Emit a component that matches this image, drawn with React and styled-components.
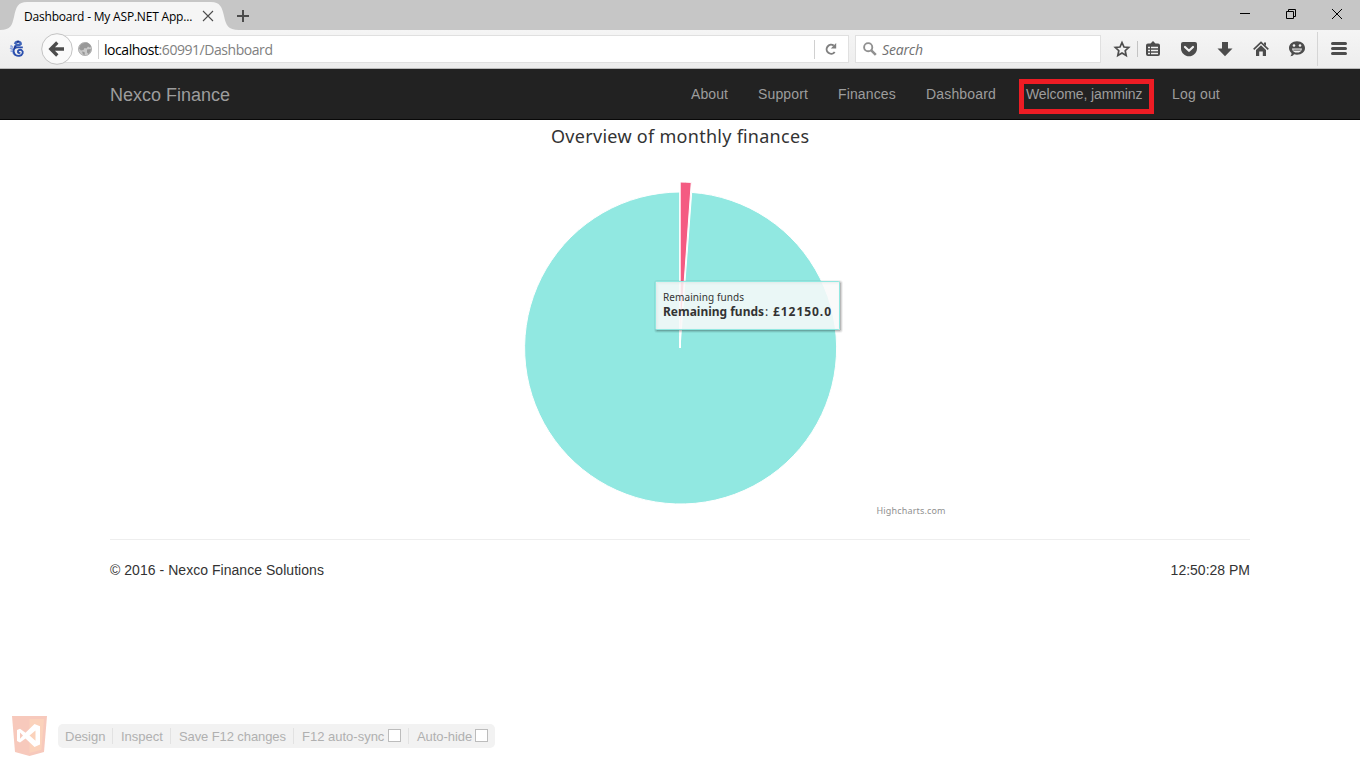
import React from "react";
import styled, { createGlobalStyle } from "styled-components";

const GlobalStyle = createGlobalStyle`
  * { box-sizing: border-box; }
  html, body { margin: 0; padding: 0; background: #fff; overflow: hidden; }
  body { font: 14px/20px "Liberation Sans", Arial, sans-serif; color: #333; }
`;

const uiFont = `"Open Sans", "Noto Sans", sans-serif`;
const chartFont = `"Noto Sans", "Open Sans", sans-serif`;

const Window = styled.div`
  display: flex;
  flex-direction: column;
  width: 1360px;
  height: 768px;
`;

/* ---- browser chrome ---- */
const TitleBar = styled.div`
  display: flex;
  height: 30px;
  flex: none;
  background: #c6c6c6;
`;
const Tab = styled.div`
  display: grid;
  width: 240px;
  height: 30px;
  flex: none;
  & > * { grid-area: 1 / 1; }
`;
const TabContent = styled.div`
  display: flex;
  align-items: center;
  z-index: 1;
  height: 30px;
  padding: 3px 24px 0 24px;
  justify-content: space-between;
`;
const TabTitle = styled.span`
  font: 12px/16px ${uiFont};
  letter-spacing: -0.19px;
  color: #000;
  white-space: nowrap;
`;
const WindowControls = styled.div`
  display: flex;
  flex: 1;
`;
const Spacer = styled.div`
  flex: 1;
`;
const ToolBar = styled.div`
  display: flex;
  align-items: center;
  height: 39px;
  flex: none;
  background: linear-gradient(#f5f5f5, #ededed);
  border-bottom: 1px solid #b9b9b9;
`;
const Glyph = styled.svg`
  display: block;
  flex: none;
  overflow: visible;
  z-index: 1;
`;
const AddressBar = styled.div`
  display: flex;
  align-items: center;
  width: 790px;
  height: 28px;
  margin-left: -14px;
  padding-left: 18px;
  background: #fff;
  border: 1px solid #e0e0e0;
`;
const FieldRule = styled.div`
  width: 1px;
  height: 19px;
  background: #d0d0d0;
`;
const Url = styled.span`
  flex: 1;
  padding: 2px 0 0 5px;
  font: 14px/20px ${uiFont};
  letter-spacing: -0.45px;
  color: #808080;
  b { font-weight: 400; color: #000; }
`;
const SearchBox = styled.div`
  display: flex;
  align-items: center;
  gap: 5px;
  width: 246px;
  height: 28px;
  margin-left: 6px;
  padding-left: 7px;
  background: #fff;
  border: 1px solid #e0e0e0;
  font: italic 14px/20px ${uiFont};
  letter-spacing: -0.15px;
  color: #707070;
`;
const SearchHint = styled.span`
  padding-top: 2px;
`;

/* ---- site ---- */
const NavBar = styled.nav`
  flex: none;
  height: 51px;
  background: #222;
  border-bottom: 1px solid #080808;
`;
const NavInner = styled.div`
  display: flex;
  justify-content: space-between;
  width: 1170px;
  margin: 0 auto;
  padding: 0 45px 0 15px;
`;
const Brand = styled.a`
  padding: 16px 0 14px;
  font-size: 18px;
  color: #9d9d9d;
`;
const NavList = styled.div`
  display: flex;
  gap: 30px;
`;
const NavLink = styled.a`
  position: relative;
  width: ${(p) => p.$w}px;
  padding: 15px 0;
  letter-spacing: ${(p) => p.$track || 0.1}px;
  white-space: nowrap;
  color: #9d9d9d;
`;
const Highlight = styled.span`
  position: absolute;
  left: -7px;
  top: 10px;
  width: 135px;
  height: 35px;
  border: 5px solid #ed1c24;
`;
const Main = styled.main`
  display: flex;
  flex-direction: column;
  align-items: stretch;
  width: 1140px;
  margin: 0 auto;
  flex: 1;
`;
const Chart = styled.svg`
  display: block;
  align-self: center;
  font-family: ${chartFont};
`;
const Footer = styled.footer`
  display: flex;
  justify-content: space-between;
  margin-top: 19px;
  padding-top: 20px;
  border-top: 1px solid #eee;
`;
const Copyright = styled.span`
  letter-spacing: 0.04px;
`;

/* ---- developer link bar ---- */
const DevBar = styled.div`
  display: flex;
  align-items: center;
  gap: 11px;
  flex: none;
  height: 40px;
  margin: 0 0 12px 12px;
`;
const DevMenu = styled.div`
  display: flex;
  align-items: center;
  height: 24px;
  width: 437px;
  border-radius: 5px;
  background: #f2f2f2;
`;
const DevItem = styled.span`
  display: flex;
  align-items: center;
  height: 16px;
  width: ${(p) => p.$w}px;
  padding-left: ${(p) => (p.$first ? 7 : 8)}px;
  border-right: ${(p) => (p.$last ? 0 : 1)}px solid #e2e2e2;
  font-size: 13px;
  line-height: 16px;
  letter-spacing: ${(p) => p.$track || 0}px;
  white-space: nowrap;
  color: #b0b0b0;
`;
const DevLabel = styled.span`
  padding-top: 2px;
`;
const CheckBox = styled.i`
  width: 13px;
  height: 13px;
  margin: -1px 7px 0 auto;
  border: 1px solid #bcbcbc;
  background: #fff;
`;

const ink = "#4c4c4c";

const Fav = () => (
  <Glyph width="18" height="18" viewBox="0 0 18 18" style={{ marginLeft: 9 }} fill="none">
    <path d="M6 4C6.500 1.500 10 .8 11.500 2.800C12.500 4.300 10.800 5.300 8.500 5C6.800 4.800 6 6.400 6.500 7.600" stroke="#3d63b8" strokeWidth="2.400" />
    <path d="M1.500 5.500L4 7.500M1 8L4 9.500M1.500 11L4.500 11.500M3.500 13L5.500 13" stroke="#8ea6e0" strokeWidth="1.700" />
    <path d="M13.800 7.400H9C5.500 7.200 4.200 9.500 4.700 12C5.200 15.300 8 16.200 10.500 15.700C14 15 14.700 11.500 12.600 10.200C10.500 9.200 8.500 10.500 9 12.200C9.300 13.300 10.600 13.200 11 12.300" stroke="#2a4fae" strokeWidth="1.900" />
    <path d="M8 2L10 1.300M5 8.500L6.500 6" stroke="#1d338c" strokeWidth="1.400" />
  </Glyph>
);

const Back = () => (
  <Glyph width="32" height="32" viewBox="0 0 32 32" style={{ marginLeft: 14 }}>
    <circle cx="16" cy="16" r="15.300" fill="#fafafa" stroke="#c3c3c3" />
    <path d="M16.300 9.500L9.800 16L16.300 22.500M10.500 16H23" fill="none" stroke={ink} strokeWidth="3.300" />
  </Glyph>
);

const Globe = () => (
  <Glyph width="14" height="14" viewBox="0 0 14 14" style={{ marginRight: 6 }}>
    <circle cx="7" cy="7" r="6.600" fill="#c9c9c9" stroke="#a8a8a8" strokeWidth=".8" />
    <path d="M4 1.500L9 .6L12 2.500L13 5L11.500 5.500L10 4.500L8.500 6.500L6.500 6L5.500 8L3 8.500L1 6.500L2 3.500ZM9 7.500L12.800 7L12.500 9.500L10.500 12L9 10.500ZM4 9.500L6.500 10L7 12.800L5 12.500Z" fill="#989898" />
  </Glyph>
);

const Reload = () => (
  <Glyph width="12" height="12" viewBox="0 0 12 12" style={{ margin: "0 11px 0 10px" }}>
    <path d="M9.700 9A4.500 4.500 0 1 1 8.800 2.600" fill="none" stroke="#808080" strokeWidth="2" />
    <path d="M11.200 0V5.500H5.800Z" fill="#808080" />
  </Glyph>
);

const Tools = () => (
  <Glyph width="259" height="38" viewBox="1101 30 259 38">
    <path d="M1122 42.500L1124 47L1128.700 47.500L1125.200 50.700L1126.200 55.500L1122 53.100L1117.800 55.500L1118.800 50.700L1115.300 47.500L1120 47Z" fill="none" stroke={ink} strokeWidth="1.700" />
    <path d="M1137.500 41V57" stroke="#c4c4c4" />
    <path d="M1148 43.500H1150.500L1153 41L1155.500 43.500H1158Q1160 43.500 1160 45.500V54Q1160 56 1158 56H1148Q1146 56 1146 54V45.500Q1146 43.500 1148 43.500Z" fill={ink} />
    <path d="M1148 47.500H1150M1151 47.500H1158M1148 50.500H1150M1151 50.500H1158M1148 53.500H1150M1151 53.500H1158" stroke="#f2f2f2" strokeWidth="1.400" />
    <path d="M1183 42H1195Q1197 42 1197 44V48.500C1197 53 1193 56.300 1189 56.300C1185 56.300 1181 53 1181 48.500V44Q1181 42 1183 42Z" fill={ink} />
    <path d="M1185 47L1189 50.800L1193 47" fill="none" stroke="#f2f2f2" strokeWidth="2.200" strokeLinecap="round" strokeLinejoin="round" />
    <path d="M1222 42H1228V48.500H1232.500L1225 56.300L1217.500 48.500H1222Z" fill={ink} />
    <path d="M1253.700 49.300L1261 42.500L1268.300 49.300" fill="none" stroke={ink} strokeWidth="1.700" />
    <path d="M1261 45.300L1266 50V56H1262.800V51.500H1259.200V56H1256V50ZM1264 42.500H1266V46L1264 44.200Z" fill={ink} />
    <path d="M1297 41.200C1301.800 41.200 1305 44.200 1305 48C1305 51.800 1301.800 54.700 1297 54.700C1295.800 54.700 1295 54.500 1294 54.200C1293.500 55.500 1292.200 56.200 1290.300 56.200C1291.300 55.300 1291.600 54.200 1291.500 53C1290 51.700 1289 50 1289 48C1289 44.200 1292.200 41.200 1297 41.200Z" fill={ink} />
    <path d="M1292 48.500H1302C1301.500 51.500 1299.500 52.600 1297 52.600C1294.500 52.600 1292.500 51.500 1292 48.500Z" fill="#f2f2f2" />
    <path d="M1293.300 50.100H1300.700" stroke={ink} strokeWidth="1" />
    <circle cx="1294" cy="45.500" r="1.300" fill="#f2f2f2" />
    <circle cx="1300" cy="45.500" r="1.300" fill="#f2f2f2" />
    <path d="M1317.500 32V66" stroke="#d5d5d5" />
    <path d="M1332.500 43.500H1345.500M1332.500 48.500H1345.500M1332.500 53.500H1345.500" stroke={ink} strokeWidth="3" strokeLinecap="round" />
  </Glyph>
);

const CX = 275;
const CY = 228;
const R = 156;
const SLICE = 0.071;
const wedge = (x, y) =>
  `M${x} ${y}V${y - R}A${R} ${R} 0 0 1 ${x + R * Math.sin(SLICE)} ${y - R * Math.cos(SLICE)}Z`;

const PieChart = () => (
  <Chart width="550" height="400" viewBox="0 0 550 400">
    <text x="146" y="23" fontSize="18" textLength="258" fill="#333">Overview of monthly finances</text>
    <path
      d={`M${CX} ${CY}L${CX + R * Math.sin(SLICE + 0.004)} ${CY - R * Math.cos(SLICE)}A${R} ${R} 0 1 1 ${CX} ${CY - R}Z`}
      fill="#91e8e1" stroke="#fff" strokeWidth="1"
    />
    <path d={`M${CX} ${CY}V${CY - R}`} stroke="#fff" strokeWidth="1.400" />
    <path d={wedge(CX + 0.2, CY - 10)} fill="#f45b82" stroke="#fff" strokeWidth="1" />
    <path d={`M${CX + 0.2} ${CY}V${CY - 12}`} stroke="#fff" strokeWidth="1.600" />
    <g fill="none" stroke="#000">
      <rect x="251.500" y="162.500" width="184" height="48" rx="1" strokeOpacity=".05" strokeWidth="5" />
      <rect x="251.500" y="162.500" width="184" height="48" rx="1" strokeOpacity=".1" strokeWidth="3" />
      <rect x="251.500" y="162.500" width="184" height="48" rx="1" strokeOpacity=".15" strokeWidth="1" />
    </g>
    <rect x="250.500" y="161.500" width="184" height="48" rx="1" fill="#f9f9f9" fillOpacity=".85" stroke="#91e8e1" />
    <g fill="#333">
      <text x="258" y="181" fontSize="10" textLength="81">Remaining funds</text>
      <text x="258" y="196" fontSize="12" fontWeight="700" textLength="101" lengthAdjust="spacingAndGlyphs">Remaining funds</text>
      <text x="360" y="196" fontSize="12">:</text>
      <text x="368" y="196" fontSize="12" fontWeight="700" textLength="58">£12150.0</text>
    </g>
    <text x="471.500" y="394" fontSize="9" textLength="69" fill="#909090">Highcharts.com</text>
  </Chart>
);

const Logo = () => (
  <Glyph width="35" height="40" viewBox="0 0 35 40">
    <path d="M0 0H35L32 36L17.500 40L3 36Z" fill="#f7c9bc" />
    <path d="M17.500 3H32L29.400 33.800L17.500 37Z" fill="#fbd2bb" />
    <path fillRule="evenodd" d="M22.500 8L28 10.300V28.500L22.500 31L13.500 22.500L8 26.500L5 25V14L8 12.700L13.500 16.800ZM23.500 14.500L17.500 19.600L23.500 24.800ZM8 16.600V22.700L11 19.600Z" fill="#fff" />
  </Glyph>
);

export default function App() {
  return (
    <Window>
      <GlobalStyle />
      <TitleBar>
        <Tab>
          <Glyph width="240" height="30" style={{ zIndex: 0 }}>
            <path d="M0 30C11 30 12 25 14 17C16 7 18 2 27 2H211C220 2 222 7 224 16C226 25 228 30 239 30Z" fill="#f5f5f5" />
          </Glyph>
          <TabContent>
            <TabTitle>Dashboard - My ASP.NET App...</TabTitle>
            <Glyph width="16" height="16" viewBox="0 0 16 16" style={{ marginTop: -1 }}>
              <path d="M3 3L13 13M13 3L3 13" stroke="#4c4c4c" strokeWidth="1.100" />
            </Glyph>
          </TabContent>
        </Tab>
        <WindowControls>
          <Glyph width="20" height="30" viewBox="234 0 20 30" style={{ marginLeft: -6 }}>
            <path d="M237 16H249M243 10V22" stroke="#4c4c4c" strokeWidth="2" />
          </Glyph>
          <Spacer />
          <Glyph width="120" height="30" viewBox="1240 0 120 30">
            <path d="M1240 13.500H1250M1286.500 11.500H1293.500V18.500H1286.500ZM1288.500 11.500V9.500H1295.500V16.500H1293.500M1332 9L1342 19M1342 9L1332 19" fill="none" stroke="#000" />
          </Glyph>
        </WindowControls>
      </TitleBar>
      <ToolBar>
        <Fav />
        <Back />
        <AddressBar>
          <Globe />
          <FieldRule />
          <Url><b>localhost</b>:60991/Dashboard</Url>
          <FieldRule />
          <Reload />
        </AddressBar>
        <SearchBox>
          <Glyph width="14" height="14" viewBox="0 0 14 14">
            <circle cx="5.200" cy="5.200" r="4.100" fill="none" stroke="#909090" strokeWidth="1.900" />
            <path d="M8.300 8.300L12.800 12.800" stroke="#909090" strokeWidth="2.600" />
          </Glyph>
          <SearchHint>Search</SearchHint>
        </SearchBox>
        <Tools />
      </ToolBar>
      <NavBar>
        <NavInner>
          <Brand>Nexco Finance</Brand>
          <NavList>
            <NavLink $w={37}>About</NavLink>
            <NavLink $w={50} $track={0.15}>Support</NavLink>
            <NavLink $w={58} $track={0.13}>Finances</NavLink>
            <NavLink $w={70} $track={0.16}>Dashboard</NavLink>
            <NavLink $w={116} $track={-0.1}>Welcome, jamminz<Highlight /></NavLink>
            <NavLink $w={48} $track={0.17}>Log out</NavLink>
          </NavList>
        </NavInner>
      </NavBar>
      <Main>
        <PieChart />
        <Footer>
          <Copyright>© 2016 - Nexco Finance Solutions</Copyright>
          <span>12:50:28 PM</span>
        </Footer>
      </Main>
      <DevBar>
        <Logo />
        <DevMenu>
          <DevItem $w={55} $first><DevLabel>Design</DevLabel></DevItem>
          <DevItem $w={58}><DevLabel>Inspect</DevLabel></DevItem>
          <DevItem $w={123} $track={-0.1}><DevLabel>Save F12 changes</DevLabel></DevItem>
          <DevItem $w={115}><DevLabel>F12 auto-sync</DevLabel><CheckBox /></DevItem>
          <DevItem $w={86} $last $track={-0.05}><DevLabel>Auto-hide</DevLabel><CheckBox /></DevItem>
        </DevMenu>
      </DevBar>
    </Window>
  );
}
